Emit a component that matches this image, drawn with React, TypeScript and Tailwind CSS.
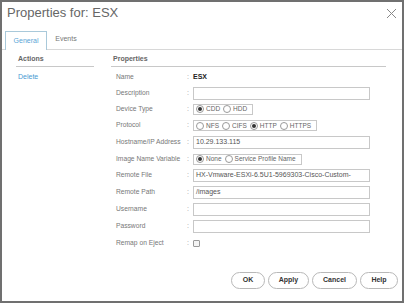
import React from 'react';

const font = { fontFamily: '"Liberation Sans", Arial, sans-serif' };

const Radio: React.FC<{ label: string; checked?: boolean }> = ({ label, checked }) => (
  <span className="flex items-center gap-[2px] mr-[3px]">
    <span className="w-[8px] h-[8px] rounded-full border border-[#9a9a9a] bg-white flex items-center justify-center">
      {checked && <span className="w-[4px] h-[4px] rounded-full bg-[#333]" />}
    </span>
    <span>{label}</span>
  </span>
);

const RadioGroup: React.FC<{ children: React.ReactNode }> = ({ children }) => (
  <div className="flex items-center h-[11px] px-[2px] border border-[#c8c8c8] text-[6.5px] text-[#666]">
    {children}
  </div>
);

const TextInput: React.FC<{ value?: string }> = ({ value }) => (
  <div className="w-[177px] h-[13px] border border-[#c8c8c8] px-[2px] flex items-center text-[7px] text-[#555] overflow-hidden whitespace-nowrap">
    {value}
  </div>
);

type Row = { label: string; h: string; value: React.ReactNode };

const rows: Row[] = [
  { label: 'Name', h: 'h-[16px]', value: <span className="font-bold text-[#222] text-[7px]">ESX</span> },
  { label: 'Description', h: 'h-[16px]', value: <TextInput /> },
  {
    label: 'Device Type', h: 'h-[16px]',
    value: <RadioGroup><Radio label="CDD" checked /><Radio label="HDD" /></RadioGroup>,
  },
  {
    label: 'Protocol', h: 'h-[17px]',
    value: (
      <RadioGroup>
        <Radio label="NFS" /><Radio label="CIFS" /><Radio label="HTTP" checked /><Radio label="HTTPS" />
      </RadioGroup>
    ),
  },
  { label: 'Hostname/IP Address', h: 'h-[17px]', value: <TextInput value="10.29.133.115" /> },
  {
    label: 'Image Name Variable', h: 'h-[16px]',
    value: <RadioGroup><Radio label="None" checked /><Radio label="Service Profile Name" /></RadioGroup>,
  },
  { label: 'Remote File', h: 'h-[17px]', value: <TextInput value="HX-Vmware-ESXi-6.5U1-5969303-Cisco-Custom-" /> },
  { label: 'Remote Path', h: 'h-[17px]', value: <TextInput value="/images" /> },
  { label: 'Username', h: 'h-[17px]', value: <TextInput /> },
  { label: 'Password', h: 'h-[17px]', value: <TextInput /> },
  {
    label: 'Remap on Eject', h: 'h-[16px]',
    value: <span className="block w-[7px] h-[7px] border border-[#9a9a9a] rounded-[1px] bg-[#f4f4f4]" />,
  },
];

const App: React.FC = () => {
  const btnCls = "h-[17px] rounded-full border border-[#b8b8b8] bg-white text-[7px] font-bold text-[#333] flex items-center justify-center";

  return (
    <div style={font} className="w-[404px] h-[303px] bg-white border-2 border-[#707070] flex flex-col overflow-hidden">
      <div className="flex items-start justify-between pl-[5px] pr-[5px] pt-[3px] h-[29px]">
        <h1 className="text-[13px] text-[#666] leading-[16px]">Properties for: ESX</h1>
        <svg width="11" height="11" viewBox="0 0 11 11" className="mt-[3px]">
          <path d="M1 1 L10 10 M10 1 L1 10" stroke="#888" strokeWidth="1" />
        </svg>
      </div>

      {/* Tabs */}
      <div className="flex items-end pl-[3px] pr-[2px] border-b border-[#d8d8d8] h-[19px]">
        <div className="w-[42px] h-[19px] border border-b-0 border-[#a9c9da] bg-white -mb-px flex items-center justify-center text-[7px] text-[#5aa5d6]">
          General
        </div>
        <div className="w-[38px] h-[19px] flex items-center justify-center text-[7px] text-[#777]">Events</div>
      </div>

      <div className="flex flex-1 pt-[3px]">
        {/* Actions */}
        <div className="w-[78px] ml-[14px]">
          <div className="h-[14px] border-b border-[#c8c8c8] flex items-center pl-[2px] text-[7px] font-bold text-[#666]">Actions</div>
          <div className="h-[16px] mt-[2px] flex items-center pl-[2px] text-[7px] text-[#4a9bd3]">Delete</div>
        </div>

        {/* Properties */}
        <div className="w-[275px] ml-[17px]">
          <div className="h-[14px] border-b border-[#c8c8c8] flex items-center pl-[2px] text-[7px] font-bold text-[#666]">Properties</div>
          <div className="mt-[2px]">
            {rows.map(r => (
              <div key={r.label} className={`flex items-center ${r.h}`}>
                <span className="w-[76px] pl-[5px] text-[6.7px] text-[#777] whitespace-nowrap">{r.label}</span>
                <span className="w-[6px] text-[7px] text-[#999]">:</span>
                <div className="flex items-center">{r.value}</div>
              </div>
            ))}
          </div>
        </div>
      </div>

      <div className="flex justify-end gap-[3px] pr-[4px] pb-[12px]">
        <button className={`${btnCls} w-[34px]`}>OK</button>
        <button className={`${btnCls} w-[41px]`}>Apply</button>
        <button className={`${btnCls} w-[45px]`}>Cancel</button>
        <button className={`${btnCls} w-[38px]`}>Help</button>
      </div>
    </div>
  );
};

export default App;
